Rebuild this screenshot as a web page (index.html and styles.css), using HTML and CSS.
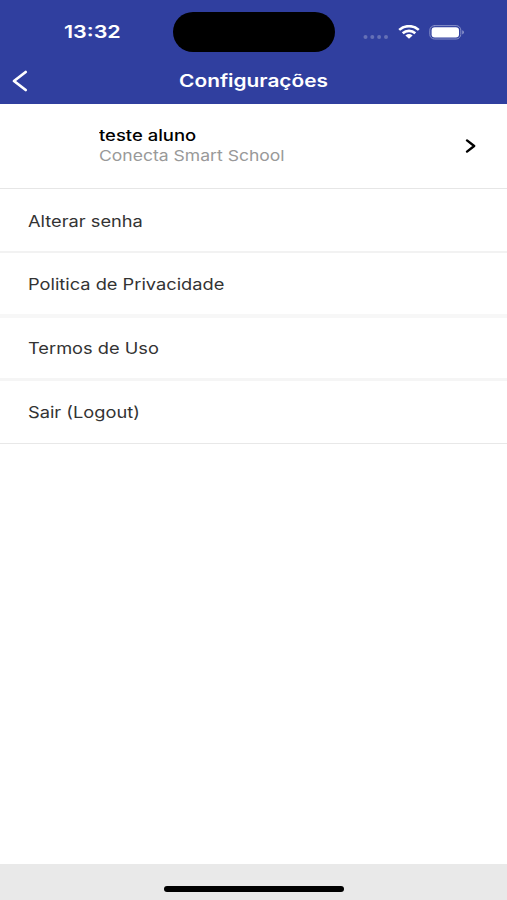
FILE: index.html
```html
<!DOCTYPE html>
<html lang="pt-BR">

<head>
    <meta charset="UTF-8">
    <meta name="viewport" content="width=device-width, initial-scale=1" />
    <title>Configurações</title>
    <link rel="stylesheet" href="styles.css">
</head>

<body>

    <div class="screen">

        <header class="header">
            <div class="status-bar">
                <div class="status-time"><span class="wide time">13:32</span></div>
                <div class="island"></div>
                <div class="status-icons">
                    <svg class="signal" width="26" height="6" viewBox="0 0 26 6">
                        <circle cx="2.5" cy="3" r="2" />
                        <circle cx="9.3" cy="3" r="2" />
                        <circle cx="16.1" cy="3" r="2" />
                        <circle cx="23" cy="3" r="2" />
                    </svg>
                    <svg class="wifi" width="22" height="14" viewBox="0 0 22 14">
                        <path d="M1.2 4.9C6.8-.1 15.2-.1 20.8 4.9" />
                        <path d="M4.7 8.3C8.3 5 13.7 5 17.3 8.3" />
                        <path class="dot" d="M7.4 10.4Q11 7.8 14.6 10.4L11 13.7Z" />
                    </svg>
                    <svg class="battery" width="36" height="15" viewBox="0 0 36 15">
                        <rect class="shell" x=".8" y=".6" width="31" height="13.4" rx="4.6" />
                        <rect class="charge" x="2.6" y="2.2" width="27.4" height="10.2" rx="3.2" />
                        <path class="tip" d="M33.2 5.2Q35 5.8 35 7.3T33.2 9.4Z" />
                    </svg>
                </div>
            </div>
            <div class="nav-bar">
                <svg class="back" width="16" height="22" viewBox="0 0 16 22">
                    <path d="M13.7 2L2 11L13.7 20" />
                </svg>
                <h1><span class="wide title">Configurações</span></h1>
            </div>
        </header>

        <main class="settings">
            <div class="profile">
                <div class="profile-text">
                    <div class="name"><span class="wide">teste aluno</span></div>
                    <div class="school"><span class="wide">Conecta Smart School</span></div>
                </div>
                <svg class="arrow" width="12" height="16" viewBox="0 0 12 16">
                    <path d="M2 2.4L9.2 8L2 13.6" />
                </svg>
            </div>
            <ul class="menu">
                <li><span class="wide">Alterar senha</span></li>
                <li><span class="wide">Politica de Privacidade</span></li>
                <li><span class="wide">Termos de Uso</span></li>
                <li><span class="wide">Sair (Logout)</span></li>
            </ul>
        </main>

        <footer class="footer">
            <div class="home-indicator"></div>
        </footer>

    </div>

</body>

</html>
```
FILE: styles.css
```css
:root {
    --blue: #303f9f;
    --text: #333;
}

* {
    box-sizing: border-box;
}

body {
    background-color: white;
    color: var(--text);
    font-family: Inter, "Liberation Sans", sans-serif;
    font-size: 16px;
    margin: 0;
}

svg {
    display: block;
    fill: none;
    stroke-linecap: round;
    stroke-linejoin: round;
}

.screen {
    display: flex;
    flex-direction: column;
    height: 100vh;
}

/* widened lettering */
.wide {
    display: inline-block;
    transform: scaleX(1.17);
    transform-origin: left;
    white-space: nowrap;
}

/* ====== HEADER ====== */

.header {
    background-color: var(--blue);
    color: white;
    height: 104px;
}

.status-bar {
    align-items: center;
    display: grid;
    grid-template-columns: 173px 162px 1fr;
    height: 52px;
    padding-top: 12px;
}

.status-time {
    font-size: 17.5px;
    font-weight: 600;
    line-height: 20px;
    padding-left: 64px;
}

.time {
    transform: scaleX(1.23);
}

.island {
    background-color: black;
    border-radius: 20px;
    height: 40px;
}

.status-icons {
    align-items: center;
    display: flex;
    padding-left: 28px;
}

.signal {
    fill: #6570b6;
    margin-top: 9px;
}

.wifi {
    margin-left: 9px;
    stroke: white;
    stroke-linecap: butt;
    stroke-width: 2.6;
}

.wifi .dot {
    fill: white;
    stroke: none;
}

.battery {
    margin-left: 9px;
}

.battery .shell {
    stroke: #8790c8;
}

.battery .charge {
    fill: white;
}

.battery .tip {
    fill: #8790c8;
}

.nav-bar {
    align-items: center;
    display: grid;
    grid-template-columns: 38px 1fr 38px;
    height: 52px;
    padding-top: 5px;
}

.back {
    margin-left: 12px;
    stroke: white;
    stroke-width: 2.8;
}

h1 {
    font-size: 17.5px;
    font-weight: 600;
    line-height: 22px;
    margin: 0;
    padding-top: 1px;
    text-align: center;
}

.title {
    transform: scaleX(1.19);
    transform-origin: center;
}

/* ====== SETTINGS ====== */

.settings {
    flex: 1;
}

.profile {
    align-items: center;
    border-bottom: 1px solid #e6e6e6;
    display: flex;
    height: 85px;
    justify-content: space-between;
    padding: 0 30px 0 99px;
}

.profile-text {
    line-height: 20px;
    padding-bottom: 1px;
}

.name {
    color: black;
    font-size: 15.5px;
    font-weight: 500;
}

.name .wide {
    transform: scaleX(1.19);
}

.school {
    color: #999;
    font-size: 15px;
}

.arrow {
    stroke: black;
    stroke-width: 2.4;
}

.menu {
    list-style: none;
    margin: 0;
    padding: 0;
}

.menu .wide {
    transform: scaleX(1.14);
}

.menu li {
    align-items: center;
    border-bottom: 2px solid #f2f2f2;
    display: flex;
    height: 64px;
    padding-left: 28px;
}

.menu li:first-child {
    padding-top: 2px;
}

.menu li:nth-child(2) {
    border-bottom: 4px solid #f7f7f7;
    height: 65px;
    padding-top: 1px;
}

.menu li:nth-child(3) {
    border-bottom: 3px solid #f5f5f5;
    height: 63px;
}

.menu li:nth-child(4) {
    border-bottom: 1px solid #e8e8e8;
    height: 63px;
}

/* ====== FOOTER ====== */

.footer {
    background-color: #e9e9e9;
    display: flex;
    height: 36px;
    justify-content: center;
    padding-top: 22px;
}

.home-indicator {
    background-color: black;
    border-radius: 3px;
    height: 6px;
    width: 180px;
}
```
